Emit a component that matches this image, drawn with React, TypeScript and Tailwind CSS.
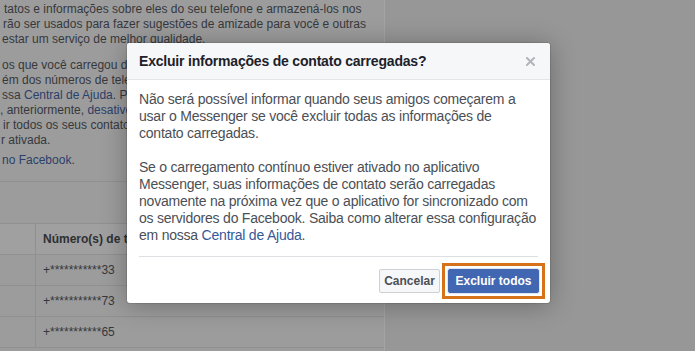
import React from "react";

const font = { fontFamily: '"Liberation Sans", Arial, Helvetica, sans-serif' };

function Line({ children, pl }: { children: React.ReactNode; pl: string }) {
  return <div className={`whitespace-nowrap ${pl}`}>{children}</div>;
}

export default function App() {
  const link = "text-[#2b3f69]";
  return (
    <div
      className="relative w-[695px] h-[351px] overflow-hidden flex bg-[#979797]"
      style={font}
    >
      {/* Left dimmed panel */}
      <div className="w-[385px] h-full bg-[#9c9c9c] border-r border-[#a4a4a4] flex flex-col pt-[2px] text-[12px] leading-[15px] text-[#36383c]">
        <div>
          <Line pl="pl-[4px]">tatos e informações sobre eles do seu telefone e armazená-los nos</Line>
          <Line pl="pl-[3px]">rão ser usados para fazer sugestões de amizade para você e outras</Line>
          <Line pl="pl-[2px]">estar um serviço de melhor qualidade.</Line>
        </div>
        <div className="mt-[11px]">
          <Line pl="pl-[2px]">os que você carregou do</Line>
          <Line pl="pl-[2px]">ém dos números de telef</Line>
          <Line pl="pl-[2px]">
            ssa <span className={link}>Central de Ajuda</span>. Pa
          </Line>
          <Line pl="pl-0">
            , anteriormente, <span className={link}>desative</span>
          </Line>
          <Line pl="pl-[3px]">ir todos os seus contatos</Line>
          <Line pl="pl-[1px]">r ativada.</Line>
        </div>
        <div className="mt-[5px]">
          <Line pl="pl-[2px]">
            <span className={link}>no Facebook</span>.
          </Line>
        </div>
        <div className="mt-[13px] h-px bg-[#909090]" />
        <div className="mt-[41px] flex flex-col">
          <div className="h-[32px] flex border-y border-[#909090] bg-[#a0a0a0]">
            <div className="w-[36px] border-r border-[#909090]" />
            <div className="pl-[7px] flex items-center font-bold text-[#2e3033] whitespace-nowrap">
              Número(s) de t
            </div>
          </div>
          {["33", "73", "65"].map((n) => (
            <div key={n} className="h-[31px] flex border-b border-[#909090]">
              <div className="w-[36px] border-r border-[#909090]" />
              <div className="pl-[7px] flex items-center text-[#34373d] whitespace-nowrap">
                +***********{n}
              </div>
            </div>
          ))}
        </div>
      </div>
      <div className="flex-1" />

      {/* Dialog */}
      <div className="absolute left-[127px] top-[43px] w-[423px] bg-white rounded-[3px] shadow-[0_2px_26px_rgba(0,0,0,0.3),0_0_0_1px_rgba(0,0,0,0.1)] flex flex-col">
        <div className="h-[37px] bg-[#f6f7f9] border-b border-[#e5e5e5] rounded-t-[3px] flex items-center justify-between pl-[12px] pr-[15px]">
          <div className="text-[14px] font-bold text-[#1d2129] tracking-[-0.2px]">
            Excluir informações de contato carregadas?
          </div>
          <svg width="9" height="9" viewBox="0 0 9 9" className="mt-[1px]">
            <path d="M1 1 L8 8 M8 1 L1 8" stroke="#b2b5bb" strokeWidth="2" strokeLinecap="square" />
          </svg>
        </div>
        <div className="pl-[12px] pr-[4px] pt-[11px] pb-[12px] text-[14px] leading-[17px] text-[#4b4f56] whitespace-nowrap tracking-[-0.22px]">
          <p>
            Não será possível informar quando seus amigos começarem a<br />
            usar o Messenger se você excluir todas as informações de<br />
            contato carregadas.
          </p>
          <p className="mt-[17px]">
            Se o carregamento contínuo estiver ativado no aplicativo<br />
            Messenger, suas informações de contato serão carregadas<br />
            novamente na próxima vez que o aplicativo for sincronizado com<br />
            os servidores do Facebook. Saiba como alterar essa configuração<br />
            em nossa <span className="text-[#365899]">Central de Ajuda</span>.
          </p>
        </div>
        <div className="mx-[12px] h-px bg-[#dddfe2]" />
        <div className="flex justify-end items-center gap-[8px] pt-[12px] pb-[10px] pr-[11px]">
          <button className="w-[61px] h-[24px] rounded-[2px] border border-[#ced0d4] bg-[#f6f7f9] text-[12px] font-bold text-[#4b4f56] flex items-center justify-center">
            Cancelar
          </button>
          <div className="relative">
            <button className="w-[91px] h-[24px] rounded-[2px] border border-[#4267b2] bg-[#4267b2] text-[12px] font-bold text-white flex items-center justify-center shadow-[0_0_0_1px_#dfe6f3]">
              Excluir todos
            </button>
            <div className="absolute -left-[6px] -right-[6px] -top-[6px] -bottom-[6px] border-[3px] border-[#d6731a] pointer-events-none" />
          </div>
        </div>
      </div>
    </div>
  );
}
